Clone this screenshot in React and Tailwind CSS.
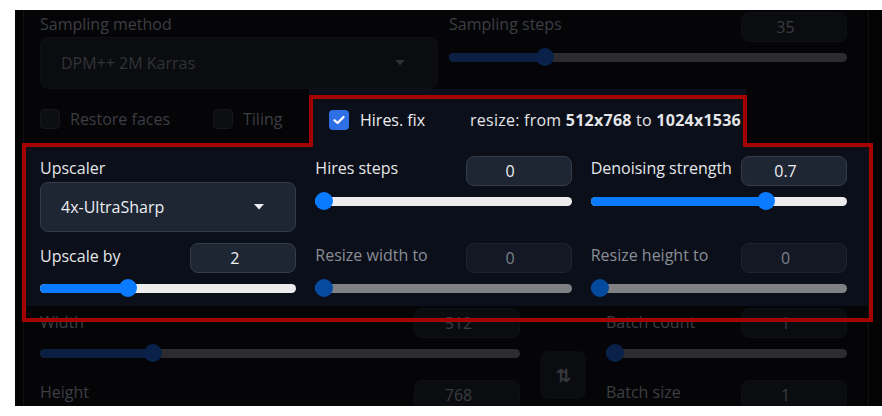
import React from 'react';

const font = { fontFamily: '"Open Sans", "Noto Sans", sans-serif' };

// value -> thumb position, thumb is 18px wide
const Slider = ({ pct, variant }) => {
  const styles = {
    dim: { track: 'bg-[#2c2c2e]', fill: 'bg-[#0a1f42]', thumb: 'bg-[#0a2249]' },
    on: { track: 'bg-[#ececec]', fill: 'bg-[#0a7bff]', thumb: 'bg-[#0a7bff]' },
    off: { track: 'bg-[#808184]', fill: 'bg-[#054a9e]', thumb: 'bg-[#054a9e]' },
  }[variant];
  return (
    <div className="relative h-[18px] flex items-center">
      <div className={`w-full h-[9px] rounded-full ${styles.track}`} />
      <div
        className={`absolute left-0 h-[9px] rounded-l-full ${styles.fill}`}
        style={{ width: `calc((100% - 18px) * ${pct} + 9px)` }}
      />
      <div
        className={`absolute w-[18px] h-[18px] rounded-full ${styles.thumb}`}
        style={{ left: `calc((100% - 18px) * ${pct})` }}
      />
    </div>
  );
};

const NumBox = ({ value, variant }) => {
  const cls = {
    dim: 'bg-[#0b0c0f] border-[#0e1014] text-[#3a3c41]',
    on: 'bg-[#1e2533] border-[#343c4a] text-[#eceef1]',
    off: 'bg-[#131824] border-[#1e2431] text-[#7b8089]',
  }[variant];
  return (
    <div className={`w-[106px] h-[30px] rounded-lg border flex items-center justify-center pr-[17px] text-[16px] ${cls}`}>
      {value}
    </div>
  );
};

const Caret = ({ color }) => (
  <svg width="10" height="6" viewBox="0 0 10 6">
    <path d="M0 0 L10 0 L5 5.5 Z" fill={color} />
  </svg>
);

const Box = () => <div className="w-[20px] h-[20px] rounded-[4px] bg-[#0d0e11] border border-[#15171b]" />;

const Field = ({ label, value, variant, pct, labelCls, top = 'mt-[2px]' }) => (
  <div>
    <div className="flex justify-between items-start">
      <div className={`${top} leading-[20px] ${labelCls}`}>{label}</div>
      <NumBox value={value} variant={variant} />
    </div>
    <div className="mt-[6px]">
      <Slider pct={pct} variant={variant} />
    </div>
  </div>
);

export default function App() {
  return (
    <div className="bg-white w-[882px] h-[416px] pt-[10px] pl-[15px]" style={font}>
      <div className="relative h-[396px] overflow-hidden bg-[#030304] pl-[8px] pr-[13px]">
        <div className="h-full bg-[#050507] border-x border-[#0f1013] pl-[16px] pr-[21px] font-medium text-[16px]">
          {/* sampling */}
          <div className="grid grid-cols-2 gap-[11px] h-[79px]">
            <div className="pt-[4px]">
              <div className="leading-[20px] text-[#3c3e43]">Sampling method</div>
              <div className="mt-[3px] h-[52px] rounded-lg bg-[#0b0c0f] border border-[#0e1014] flex items-center justify-between pl-[20px] pr-[32px] text-[#313338]">
                DPM++ 2M Karras
                <Caret color="#2c2e33" />
              </div>
            </div>
            <div className="pt-[2px]">
              <Field label="Sampling steps" value="35" variant="dim" pct={0.228} labelCls="text-[#3c3e43]" />
            </div>
          </div>

          {/* checkbox row */}
          <div className="flex h-[57px] items-stretch">
            <div className="w-[173px] flex items-center gap-[10px] pt-[2px] text-[#3c3e43]">
              <Box />
              Restore faces
            </div>
            <div className="w-[96px] flex items-center gap-[10px] pt-[2px] text-[#3c3e43]">
              <Box />
              Tiling
            </div>
            <div className="w-[437px] bg-[#0b0f19] flex items-center pl-[20px] pt-[4px]">
              <div className="w-[20px] h-[20px] rounded-[4px] bg-[#2f6fe6] flex items-center justify-center">
                <svg width="12" height="10" viewBox="0 0 12 10">
                  <path d="M1.5 5.2 L4.6 8 L10.5 2" stroke="white" strokeWidth="2.2" fill="none" strokeLinecap="round" strokeLinejoin="round" />
                </svg>
              </div>
              <span className="ml-[11px] w-[110px] text-[#eceef1]">Hires. fix</span>
              <span className="text-[#e3e5e8] tracking-[0.25px]">
                resize: from <b className="font-bold">512x768</b> to <b className="font-bold">1024x1536</b>
              </span>
            </div>
          </div>

          {/* hires panel */}
          <div className="-ml-[16px] -mr-[21px] pl-[16px] pr-[21px] h-[160px] bg-[#0b0f19] pt-[10px] grid grid-cols-3 content-start gap-x-[19px]">
            <div className="h-[87px]">
              <div className="mt-[2px] leading-[20px] text-[#e5e7eb]">Upscaler</div>
              <div className="mt-[4px] h-[50px] rounded-lg bg-[#1e2533] border border-[#343c4a] flex items-center justify-between pl-[20px] pr-[31px] text-[#eceef1]">
                4x-UltraSharp
                <Caret color="#eceef1" />
              </div>
            </div>
            <div className="h-[87px]">
              <Field label="Hires steps" value="0" variant="on" pct={0} labelCls="text-[#e5e7eb]" />
            </div>
            <div className="h-[87px]">
              <Field label="Denoising strength" value="0.7" variant="on" pct={0.7} labelCls="text-[#e5e7eb]" />
            </div>

            <Field label="Upscale by" value="2" variant="on" pct={0.333} labelCls="text-[#e5e7eb]" top="mt-[3px]" />
            <Field label="Resize width to" value="0" variant="off" pct={0} labelCls="text-[#8a8e96]" />
            <Field label="Resize height to" value="0" variant="off" pct={0} labelCls="text-[#8a8e96]" />
          </div>

          {/* width / height / batch */}
          <div className="flex gap-[20px] pt-[2px] text-[#3c3e43]">
            <div className="w-[480px]">
              <Field label="Width" value="512" variant="dim" pct={0.226} top="mt-[4px]" />
              <div className="mt-[18px] flex justify-between items-start">
                <div className="mt-[2px] leading-[20px]">Height</div>
                <NumBox value="768" variant="dim" />
              </div>
            </div>
            <div className="pt-[43px]">
              <div className="w-[46px] h-[48px] rounded-lg bg-[#0b0c0f] flex items-center justify-center text-[18px] font-bold text-[#35373c]">
                ⇅
              </div>
            </div>
            <div className="flex-1">
              <Field label="Batch count" value="1" variant="dim" pct={0} top="mt-[4px]" />
              <div className="mt-[18px] flex justify-between items-start">
                <div className="mt-[2px] leading-[20px]">Batch size</div>
                <NumBox value="1" variant="dim" />
              </div>
            </div>
          </div>
        </div>

        {/* red annotation outline */}
        <svg className="absolute left-0 top-0 pointer-events-none" width="867" height="396">
          <path
            d="M9 310 L9 135 L296 135 L296 87 L730 87 L730 135 L856 135 L856 310 Z"
            fill="none"
            stroke="#a30000"
            strokeWidth="4"
          />
        </svg>
      </div>
    </div>
  );
}
